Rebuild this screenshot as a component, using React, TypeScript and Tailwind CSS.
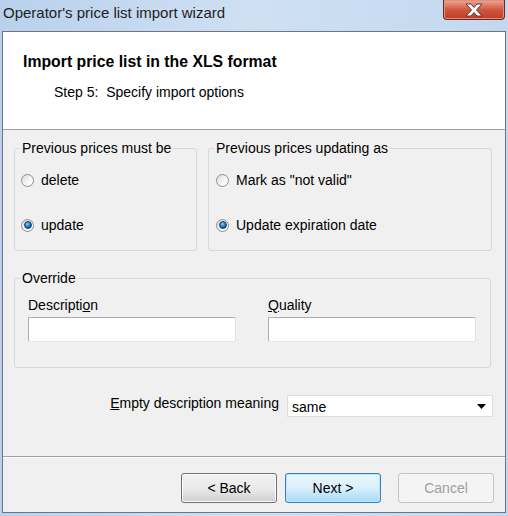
import React from "react";

function Radio({ checked }: { checked?: boolean }) {
  return (
    <span className="relative inline-flex h-[13px] w-[13px] shrink-0 items-center justify-center rounded-full border border-[#8f8f8f] bg-gradient-to-br from-[#d8d8d8] via-[#f4f4f4] to-[#ffffff]">
      {checked && (
        <span className="h-[8px] w-[8px] rounded-full border border-[#133f68] bg-[radial-gradient(circle_at_40%_35%,#8fd4ff_0%,#1f7fc6_45%,#0a3560_100%)]" />
      )}
    </span>
  );
}

function RadioRow({ label, checked }: { label: string; checked?: boolean }) {
  return (
    <div className="flex h-[16px] items-center gap-[7px]">
      <Radio checked={checked} />
      <span>{label}</span>
    </div>
  );
}

function Group({
  title,
  className,
  children,
}: {
  title: string;
  className?: string;
  children: React.ReactNode;
}) {
  return (
    <div className={"relative rounded-[3px] border border-[#d5d9dd] " + (className ?? "")}>
      <span className="absolute left-[5px] top-[-9px] bg-[#f0f0f0] px-[2px] leading-[16px]">
        {title}
      </span>
      {children}
    </div>
  );
}

function Button({
  children,
  primary,
  disabled,
}: {
  children: React.ReactNode;
  primary?: boolean;
  disabled?: boolean;
}) {
  const base = "flex h-[30px] w-[96px] items-center justify-center rounded-[3px] border ";
  if (disabled)
    return <div className={base + "border-[#c4c4c4] bg-[#f4f4f4] text-[#a0a0a0]"}>{children}</div>;
  if (primary)
    return (
      <div className={base + "border-[#3c7fb1] bg-gradient-to-b from-[#eaf6fd] via-[#d9f0fc] to-[#a7d9f5] shadow-[inset_0_0_0_1px_#b8e6fb]"}>
        {children}
      </div>
    );
  return (
    <div className={base + "border-[#707070] bg-gradient-to-b from-[#f2f2f2] via-[#ebebeb] to-[#cfcfcf] shadow-[inset_0_0_0_1px_#fcfcfc]"}>
      {children}
    </div>
  );
}

export default function App() {
  return (
    <div className="flex h-[516px] w-[508px] flex-col overflow-hidden bg-gradient-to-r from-[#b9d1ec] via-[#cfe0f3] to-[#c3d8ef] font-['Liberation_Sans',sans-serif] text-[14px] text-black">
      {/* Title bar */}
      <div className="flex h-[31px] shrink-0 items-start justify-between">
        <span className="pl-[3px] pt-[4px] text-[15px] leading-[18px] text-[#1e1e1e]">
          Operator's price list import wizard
        </span>
        <div className="mr-[3px] flex h-[20px] w-[62px] items-center justify-center rounded-b-[4px] border border-t-0 border-[#6b2a1e] bg-gradient-to-b from-[#e9a99b] via-[#d0573f] to-[#c23b24] shadow-[inset_0_0_0_1px_#e88c7a]">
          <svg width="22" height="14" viewBox="0 0 22 14">
            <path
              d="M3 1 L8 1 L11 4.5 L14 1 L19 1 L13.5 7 L19 13 L14 13 L11 9.5 L8 13 L3 13 L8.5 7 Z"
              fill="#ffffff"
              stroke="#5a3a35"
              strokeWidth="1"
              strokeLinejoin="round"
            />
          </svg>
        </div>
      </div>

      {/* Client area */}
      <div className="mx-[2px] mb-[3px] flex flex-1 flex-col border border-[#6d7680] bg-[#f0f0f0]">
        {/* Header */}
        <div className="h-[98px] shrink-0 border-b border-[#a0a0a0] bg-white pl-[20px] pt-[21px]">
          <div className="text-[15.8px] font-bold leading-[18px]">Import price list in the XLS format</div>
          <div className="mt-[13px] pl-[31px] leading-[16px]">Step 5:&nbsp; Specify import options</div>
        </div>

        {/* Body */}
        <div className="flex h-[327px] shrink-0 flex-col border-b border-[#a0a0a0] px-[11px] pt-[18px]">
          <div className="flex gap-[11px]">
            <Group title="Previous prices must be" className="h-[103px] w-[183px]">
              <div className="flex flex-col gap-[29px] pl-[6px] pt-[23px]">
                <RadioRow label="delete" />
                <RadioRow label="update" checked />
              </div>
            </Group>
            <Group title="Previous prices updating as" className="h-[103px] w-[284px]">
              <div className="flex flex-col gap-[29px] pl-[7px] pt-[23px]">
                <RadioRow label={'Mark as "not valid"'} />
                <RadioRow label="Update expiration date" checked />
              </div>
            </Group>
          </div>

          <Group title="Override" className="mt-[27px] h-[90px] w-[477px]">
            <div className="grid grid-cols-[208px_208px] gap-x-[32px] pl-[13px] pt-[18px]">
              <span className="leading-[16px]">
                Descripti<span className="underline">o</span>n
              </span>
              <span className="leading-[16px]">
                <span className="underline">Q</span>uality
              </span>
              <div className="mt-[4px] h-[25px] rounded-[2px] border border-[#abadb3] border-b-[#e3e9ef] border-r-[#dbdfe6] bg-white" />
              <div className="mt-[4px] h-[25px] rounded-[2px] border border-[#abadb3] border-b-[#e3e9ef] border-r-[#dbdfe6] bg-white" />
            </div>
          </Group>

          <div className="mt-[27px] flex items-start justify-end gap-[8px] pr-[1px]">
            <span className="leading-[16px]">
              <span className="underline">E</span>mpty description meaning
            </span>
            <div className="flex h-[22px] w-[206px] items-center justify-between border border-[#dcdcdc] bg-white pl-[4px] pr-[6px]">
              <span className="pt-[3px]">same</span>
              <svg width="9" height="5" viewBox="0 0 9 5">
                <path d="M0 0 L9 0 L4.5 5 Z" fill="#000" />
              </svg>
            </div>
          </div>
        </div>

        {/* Footer */}
        <div className="flex flex-1 items-start gap-[8px] border-t border-white pl-[178px] pt-[15px]">
          <Button>&lt; Back</Button>
          <Button primary>Next &gt;</Button>
          <div className="ml-[9px]">
            <Button disabled>Cancel</Button>
          </div>
        </div>
      </div>
    </div>
  );
}
